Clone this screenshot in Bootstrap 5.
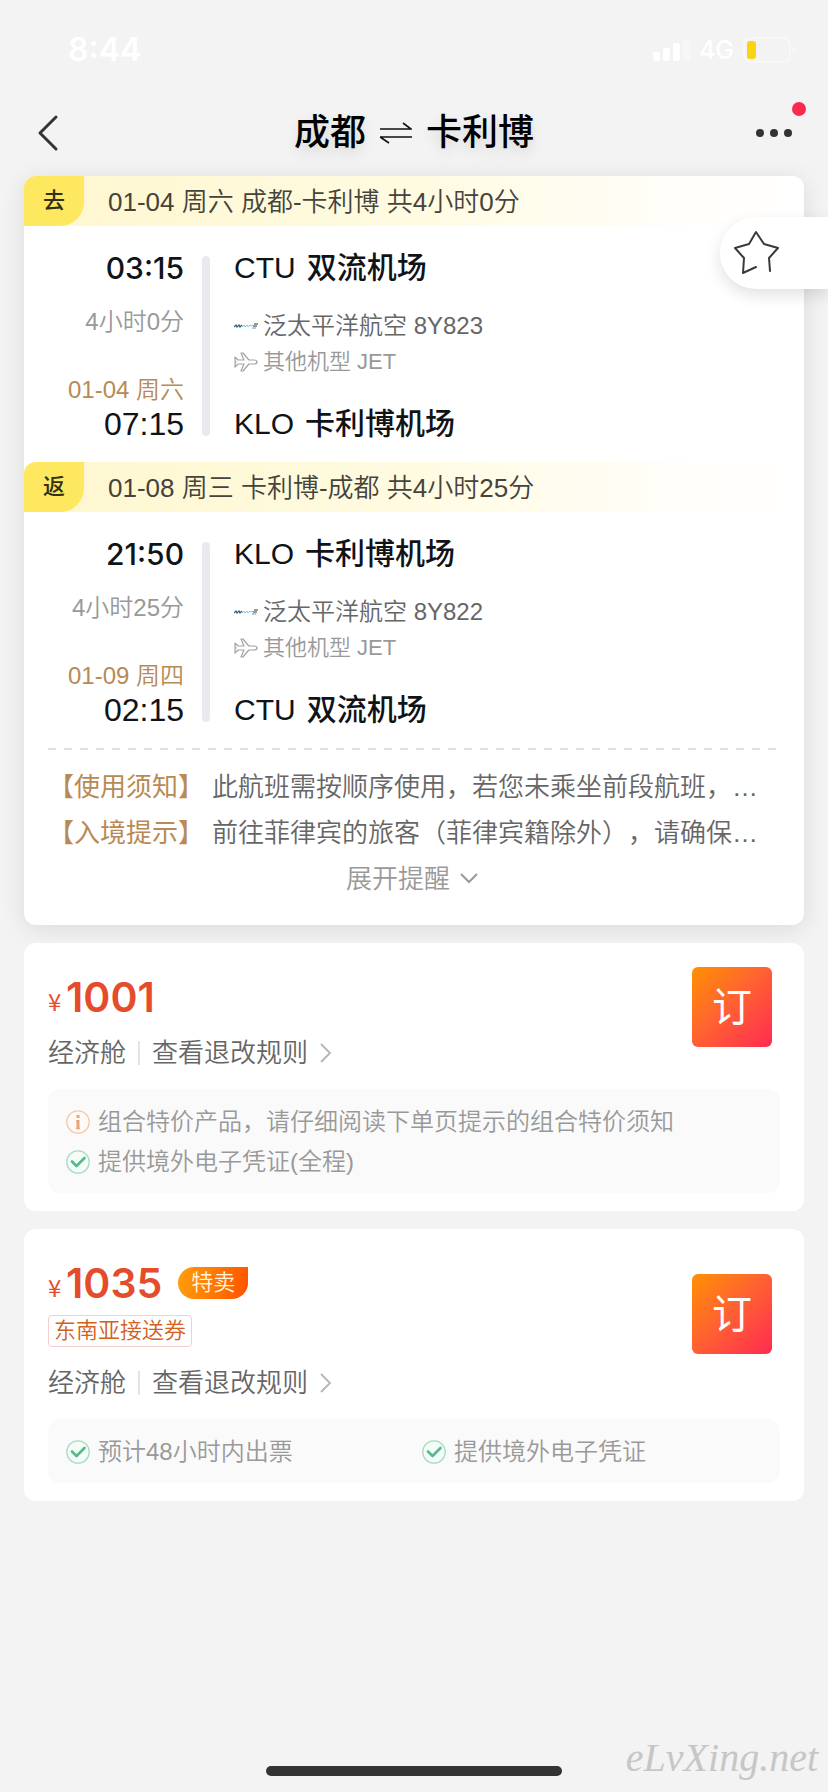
<!DOCTYPE html>
<html lang="zh-CN">
<head>
<meta charset="utf-8">
<meta name="viewport" content="width=device-width, initial-scale=1">
<title>成都 ⇌ 卡利博</title>
<link href="https://cdn.jsdelivr.net/npm/bootstrap@5.3.0/dist/css/bootstrap.min.css" rel="stylesheet">
<style>
  body { background: #f3f3f3; color: #101318; font-family: "Liberation Sans", "Noto Sans CJK SC", sans-serif; font-size: 26px; line-height: 32px; font-weight: 400; text-spacing-trim: space-all; }
  .fs-s { font-size: 22px; }
  .fs-m { font-size: 24px; }
  .thin { font-weight: 350; }
  .status { height: 98px; padding: 2px 32px 0 68px; color: #fff; font-family: Inter, sans-serif; }
  .clock { font-size: 32px; font-weight: 600; }
  .net { font-size: 25px; font-weight: 500; }
  .topbar { height: 78px; padding: 0 36px; }
  .topbar button, .plain-btn { background: none; border: 0; padding: 0; line-height: inherit; }
  .topbar h1 { font-size: 36px; font-weight: 500; color: #000; gap: 14px; line-height: 40px; text-shadow: 0 6px 14px rgba(0,0,0,.12); }
  .alert-dot { width: 14px; height: 14px; background: #fb2b4e; top: -26px; right: -14px; }
  .tone-dark { color: #666; }
  .tone-soft { color: #999; }
  .tone-gold { color: #b88a54; }
  .sheet { background: #fff; border-radius: 12px; margin: 0 24px; }
  .trip { box-shadow: 0 4px 24px rgba(0,0,0,.1); margin-bottom: 18px; }
  .leg-head { height: 50px; border-radius: 12px 12px 0 0; background: linear-gradient(90deg, #fef6cf, #fffbe0 48%, #fffefa 85%, #fff); color: #45433a; }
  .leg-head .tag { width: 60px; font-size: 22px; font-weight: 500; color: #332f16; background: #fde860; border-radius: 12px 0 24px 0; }
  .leg-title { padding-top: 2px; }
  .leg { padding: 24px 24px 20px 0; }
  .leg-times { width: 160px; }
  .big-line { font-size: 30px; line-height: 36px; font-weight: 500; gap: 11px; }
  .arrival { margin-top: 28px; }
  .maker { gap: 5px; }
  .time-main { font: 500 30px/36px Inter, sans-serif; }
  .time-end { font-size: 32px; line-height: 36px; }
  .rail { width: 8px; margin: 6px 24px 6px 18px; border-radius: 4px; background: #e9eaf0; }
  .dash { height: 2px; margin: 0 24px; background: repeating-linear-gradient(90deg, #e0e0e0 0 8px, transparent 8px 16px); }
  .notices { padding: 14px 44px 23px 24px; line-height: 46px; }
  .notices dt { font-weight: 400; }
  .fav { top: 217px; right: 0; width: 108px; height: 72px; padding: 0 0 0 12px; border: 0; background: #fff; border-radius: 36px 0 0 36px; box-shadow: 0 6px 16px rgba(0,0,0,.12); }
  .offer { padding: 0 24px 18px; margin-bottom: 18px; }
  .price { color: #e44c2c; font: 600 41px/48px Inter, sans-serif; }
  .price-row { padding-top: 6px; }
  .yen { font: 400 24px/40px "Noto Sans CJK SC", sans-serif; width: 18px; }
  .book { width: 80px; height: 80px; padding: 0; border: 0; border-radius: 6px; color: #fff; font-size: 40px; line-height: 76px; background: linear-gradient(135deg, #ff8c08 5%, #ff6430 45%, #ff304f 95%); margin-right: 8px; }
  .split { width: 2px; height: 24px; background: #e4e4e4; margin: 0 12px; }
  .cabin { margin-top: 16px; }
  .rules { text-decoration: none; gap: 12px; }
  .perks { background: #fafafa; border-radius: 12px; padding: 17px 18px 15px; margin-top: 20px; }
  .sale { width: 70px; height: 32px; font-size: 22px; color: #fff6dd; background: linear-gradient(100deg, #ffa00a, #ff5200); border-radius: 16px 0 16px 16px; }
  .coupons { padding: 8px 0 4px; }
  .coupon { font-size: 22px; line-height: 30px; color: #d2601e; border: 1px solid #f3cfd2; border-radius: 4px; padding: 0 5px; }
  .home-bar { width: 296px; height: 10px; background: #333; border-radius: 5px; margin-bottom: 16px; }
  .site-mark { right: 10px; bottom: 14px; font: italic 40px/40px "Liberation Serif", serif; color: #c6c6c6; }
</style>
</head>
<body>
<svg width="0" height="0" class="position-absolute" aria-hidden="true">
  <symbol id="plane" viewBox="0 0 24 20"><path d="M1 5l3 3h6L7 1h2l5 6 1 1h5q3 0 3 2t-3 2h-5l-1 1-5 6H7l3-7H4l-3 3v-4l1-1-1-1z" fill="none" stroke="#a2a2a2" stroke-width="1.2" stroke-linejoin="round"/></symbol>
  <symbol id="carrier" viewBox="0 0 24 6"><path d="M0 4l2-2 1 2 2-2 1 2 2-2" fill="none" stroke="#2f5b70" stroke-width="1.2"/><path d="M8 4l2-2 1 2 2-2 1 2 2-2 1 1 2-1" fill="none" stroke="#84c4dc" stroke-width="1"/><path d="M20 1h4M19 3h4" stroke="#333" stroke-width="1"/><path d="M18 5h4" stroke="#6f9aae" stroke-width="1"/></symbol>
  <symbol id="tick" viewBox="0 0 24 24"><circle cx="12" cy="12" r="11.2" fill="#f4fcf8" stroke="#a9dcc5" stroke-width="1.3"/><path d="M6 11.5l4.500 4.500 8-8" fill="none" stroke="#55b98b" stroke-width="2.600" stroke-linecap="round" stroke-linejoin="round"/></symbol>
  <symbol id="info" viewBox="0 0 24 24"><circle cx="12" cy="12" r="11.200" fill="#fffaf6" stroke="#f0cdb0" stroke-width="1.300"/><path d="M12 5v3M12 10v9" fill="none" stroke="#e8a678" stroke-width="3"/><path d="M10 11h2M10 18.500h4" stroke="#e8a678" stroke-width="1.500"/></symbol>
  <symbol id="next" viewBox="0 0 12 20"><path d="M1 1l9 9-9 9" fill="none" stroke="#b5b5b5" stroke-width="1.800"/></symbol>
</svg>

<div class="position-relative min-vh-100 d-flex flex-column">
  <div class="status d-flex align-items-center justify-content-between">
    <span class="clock">8:44</span>
    <div class="d-flex align-items-center">
      <svg width="38" height="24" viewBox="0 0 38 24" fill="#fff"><rect x="0" y="14" width="7" height="9" rx="2"/><rect x="10" y="10" width="7" height="13" rx="2"/><rect x="20" y="5" width="7" height="18" rx="2"/><rect x="30" y="1" width="7" height="22" rx="2" opacity=".35"/></svg>
      <span class="net ms-2 me-2">4G</span>
      <svg width="54" height="26" viewBox="0 0 54 26"><rect x="2" y="1" width="46" height="24" rx="7" fill="none" stroke="#f8f8f8" stroke-width="2"/><rect x="5" y="4" width="9" height="18" rx="3" fill="#fad413"/><path d="M51 9q3 4 0 8z" fill="#fafafa"/></svg>
    </div>
  </div>

  <header class="topbar d-flex align-items-center justify-content-between">
    <button type="button" aria-label="返回" class="d-flex pb-2"><svg width="38" height="38" viewBox="0 0 38 38"><path d="M20 3L4 19l16 16" fill="none" stroke="#333" stroke-width="3" stroke-linecap="round" stroke-linejoin="round"/></svg></button>
    <h1 class="d-flex align-items-center m-0 pb-2"><span>成都</span>
      <svg width="32" height="24" viewBox="0 0 32 24"><path d="M0 8h31l-8-6M32 16H0l9 6" fill="none" stroke="#111" stroke-width="1.600"/></svg>
      <span>卡利博</span></h1>
    <button type="button" aria-label="更多" class="position-relative d-flex pb-2">
      <svg width="38" height="10" viewBox="0 0 38 10" fill="#333"><circle cx="6" cy="5" r="4"/><circle cx="20" cy="5" r="4"/><circle cx="34" cy="5" r="4"/></svg>
      <span class="alert-dot position-absolute rounded-circle"></span>
    </button>
  </header>

  <button type="button" aria-label="收藏" class="fav position-absolute d-flex align-items-center">
    <svg width="48" height="46" viewBox="0 0 48 46"><path d="M38 41L37 28l9-10-14-4L24 2l-7 12-14 4 9 10-1 15 13-6" fill="none" stroke="#3a3a3a" stroke-width="2" stroke-linecap="round" stroke-linejoin="round"/></svg>
  </button>

  <main>
    <section class="sheet trip">
      <div class="leg-head d-flex">
        <span class="tag d-flex align-items-center justify-content-center">去</span>
        <span class="leg-title thin align-self-center ms-4">01-04 周六 成都-卡利博 共4小时0分</span>
      </div>
      <div class="leg d-flex">
        <div class="leg-times d-flex flex-column text-end">
          <span class="time-main">03:15</span>
          <span class="fs-m thin tone-soft mt-3 pt-1">4小时0分</span>
          <span class="fs-m thin tone-gold mt-auto">01-04 周六</span>
          <span class="time-end">07:15</span>
        </div>
        <div class="rail"></div>
        <div class="d-flex flex-column">
          <span class="big-line d-flex"><span>CTU</span> <span>双流机场</span></span>
          <span class="fs-m thin tone-dark mt-4 d-flex align-items-center maker"><svg width="24" height="6"><use href="#carrier"/></svg>泛太平洋航空 8Y823</span>
          <span class="fs-s thin tone-soft mt-1 d-flex align-items-center maker"><svg width="24" height="20"><use href="#plane"/></svg>其他机型 JET</span>
          <span class="big-line arrival d-flex"><span>KLO</span> <span>卡利博机场</span></span>
        </div>
      </div>

      <div class="leg-head d-flex">
        <span class="tag d-flex align-items-center justify-content-center">返</span>
        <span class="leg-title thin align-self-center ms-4">01-08 周三 卡利博-成都 共4小时25分</span>
      </div>
      <div class="leg d-flex">
        <div class="leg-times d-flex flex-column text-end">
          <span class="time-main">21:50</span>
          <span class="fs-m thin tone-soft mt-3 pt-1">4小时25分</span>
          <span class="fs-m thin tone-gold mt-auto">01-09 周四</span>
          <span class="time-end">02:15</span>
        </div>
        <div class="rail"></div>
        <div class="d-flex flex-column">
          <span class="big-line d-flex"><span>KLO</span> <span>卡利博机场</span></span>
          <span class="fs-m thin tone-dark mt-4 d-flex align-items-center maker"><svg width="24" height="6"><use href="#carrier"/></svg>泛太平洋航空 8Y822</span>
          <span class="fs-s thin tone-soft mt-1 d-flex align-items-center maker"><svg width="24" height="20"><use href="#plane"/></svg>其他机型 JET</span>
          <span class="big-line arrival d-flex"><span>CTU</span> <span>双流机场</span></span>
        </div>
      </div>

      <div class="dash"></div>
      <div class="notices">
        <dl class="m-0">
          <div class="d-flex gap-2"><dt class="tone-gold text-nowrap">【使用须知】</dt><dd class="thin tone-dark m-0 text-truncate">此航班需按顺序使用，若您未乘坐前段航班，…</dd></div>
          <div class="d-flex gap-2"><dt class="tone-gold text-nowrap">【入境提示】</dt><dd class="thin tone-dark m-0 text-truncate">前往菲律宾的旅客（菲律宾籍除外），请确保…</dd></div>
        </dl>
        <button type="button" class="plain-btn thin tone-soft d-flex align-items-center justify-content-center gap-2 w-100 ps-3">展开提醒
          <svg width="20" height="12" viewBox="0 0 20 12"><path d="M3 1l8 8 8-8" fill="none" stroke="#999" stroke-width="2"/></svg></button>
      </div>
    </section>

    <section class="sheet offer pt-4">
      <div class="d-flex justify-content-between">
        <div>
          <div class="price price-row d-flex align-items-end"><span class="yen">¥</span>1001</div>
          <div class="cabin thin tone-dark d-flex align-items-center">经济舱<span class="split"></span>
            <a href="#" class="rules tone-dark d-flex align-items-center">查看退改规则<svg width="12" height="20"><use href="#next"/></svg></a></div>
        </div>
        <button type="button" class="book">订</button>
      </div>
      <div class="perks fs-m thin tone-soft">
        <div class="d-flex align-items-center gap-2 mb-2"><svg width="24" height="24"><use href="#info"/></svg>组合特价产品，请仔细阅读下单页提示的组合特价须知</div>
        <div class="d-flex align-items-center gap-2"><svg width="24" height="24"><use href="#tick"/></svg>提供境外电子凭证(全程)</div>
      </div>
    </section>

    <section class="sheet offer pt-4">
      <div class="d-flex justify-content-between align-items-center">
        <div>
          <div class="price-row d-flex align-items-center gap-3">
            <div class="price d-flex align-items-end"><span class="yen">¥</span>1035</div>
            <span class="sale thin d-flex align-items-center justify-content-center">特卖</span>
          </div>
          <div class="coupons d-flex"><span class="coupon thin">东南亚接送券</span></div>
          <div class="cabin thin tone-dark d-flex align-items-center">经济舱<span class="split"></span>
            <a href="#" class="rules tone-dark d-flex align-items-center">查看退改规则<svg width="12" height="20"><use href="#next"/></svg></a></div>
        </div>
        <button type="button" class="book mb-4">订</button>
      </div>
      <div class="perks fs-m thin tone-soft">
        <div class="row g-0">
          <div class="col-6 d-flex align-items-center gap-2"><svg width="24" height="24"><use href="#tick"/></svg>预计48小时内出票</div>
          <div class="col-6 d-flex align-items-center gap-2 ps-2"><svg width="24" height="24"><use href="#tick"/></svg>提供境外电子凭证</div>
        </div>
      </div>
    </section>
  </main>

  <div class="home-bar mx-auto mt-auto"></div>
  <span class="site-mark position-absolute">eLvXing.net</span>
</div>
<script src="https://cdn.jsdelivr.net/npm/bootstrap@5.3.0/dist/js/bootstrap.bundle.min.js"></script>
</body>
</html>
